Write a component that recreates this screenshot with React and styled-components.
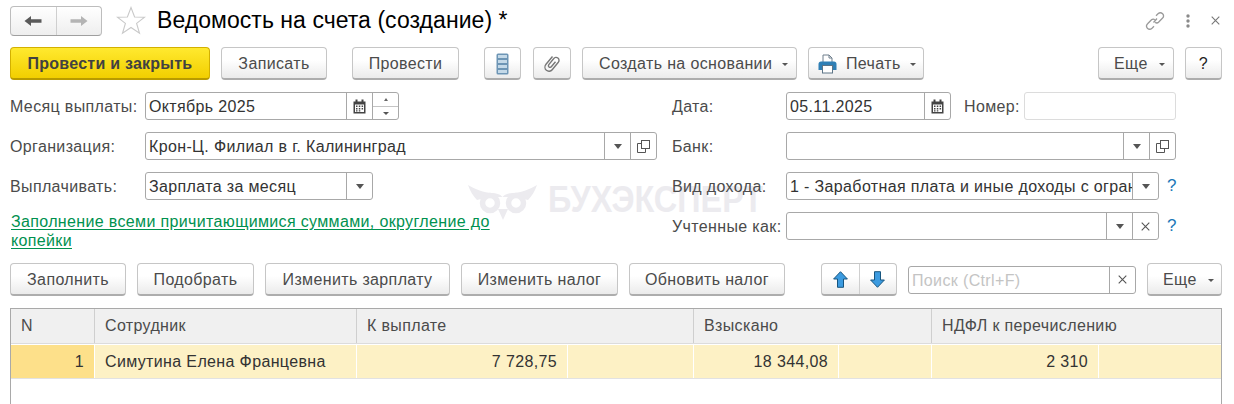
import styled, { createGlobalStyle } from "styled-components";

/* ---------- data ---------- */
const actionButtons = ["Заполнить", "Подобрать", "Изменить зарплату", "Изменить налог", "Обновить налог"];
const actionWidths = [116, 117, 185, 157, 156];

/* ---------- global ---------- */
const GlobalStyle = createGlobalStyle`
  html, body {
    margin: 0;
    padding: 0;
    background: #fff;
  }
  * {
    box-sizing: border-box;
  }
`;

const Page = styled.div`
  position: relative;
  display: flex;
  flex-direction: column;
  width: 1234px;
  height: 404px;
  overflow: hidden;
  background: #fff;
  color: #4b4b4b;
  font-family: "Liberation Sans", Arial, sans-serif;
  font-size: 16px;
  letter-spacing: 0.36px;
`;

/* ---------- header ---------- */
const TitleBar = styled.div`
  display: flex;
  align-items: center;
  height: 47px;
  padding: 0 12px 6px 10px;
`;

const NavGroup = styled.div`
  display: flex;
  width: 92px;
  height: 30px;
  border: 1px solid #bdbdbd;
  border-bottom-color: #9f9f9f;
  border-radius: 4px;
  background: linear-gradient(#ffffff, #eeeeee);
`;

const NavCell = styled.div`
  flex: 1;
  display: flex;
  align-items: center;
  justify-content: center;
  & + & {
    border-left: 1px solid #cfcfcf;
  }
`;

const StarWrap = styled.div`
  display: flex;
  margin: 0 11px 0 14px;
`;

const Title = styled.h1`
  margin: 0;
  font-size: 23px;
  font-weight: 400;
  letter-spacing: 0.05px;
  color: #000;
  white-space: nowrap;
`;

const TitleTools = styled.div`
  display: flex;
  align-items: center;
  gap: 21px;
  margin-left: auto;
  padding-right: 2px;
`;

/* ---------- buttons ---------- */
const Toolbar = styled.div`
  display: flex;
  align-items: center;
  padding: 0 10px;
  height: 33px;
`;

const Button = styled.button`
  display: flex;
  align-items: center;
  justify-content: ${(p) => (p.$pl ? "flex-start" : "center")};
  flex: none;
  gap: ${(p) => p.$inner ?? 7}px;
  width: ${(p) => p.$w}px;
  height: 33px;
  margin-left: ${(p) => p.$gap ?? 11}px;
  padding: 1px 0 0 ${(p) => p.$pl ?? 0}px;
  border: 1px solid #c6c6c6;
  border-bottom: 2px solid #adadad;
  border-radius: 4px;
  background: linear-gradient(#ffffff 40%, #ebebeb);
  color: #4b4b4b;
  font: inherit;
  letter-spacing: 0.36px;
  white-space: nowrap;
  &:first-child {
    margin-left: 0;
  }
`;

const PrimaryButton = styled(Button)`
  border-color: #d3b000;
  border-bottom-color: #b99b00;
  background: linear-gradient(#ffe92f, #f2cf00);
  color: #414141;
  font-weight: 700;
  letter-spacing: 0.25px;
`;

const HelpButton = styled(Button)`
  color: #222;
`;

const Caret = styled.span`
  width: 0;
  height: 0;
  border-left: 3px solid transparent;
  border-right: 3px solid transparent;
  border-top: 3px solid #555;
  margin-left: ${(p) => p.$ml ?? 0}px;
  margin-top: 2px;
`;

const ArrowGroup = styled.div`
  display: flex;
  flex: none;
  width: 76px;
  height: 33px;
  margin-left: ${(p) => p.$gap}px;
  border: 1px solid #c6c6c6;
  border-bottom: 2px solid #adadad;
  border-radius: 4px;
  background: linear-gradient(#ffffff 40%, #ebebeb);
`;

/* ---------- form ---------- */
const Form = styled.div`
  display: grid;
  grid-template-columns: 662px 1fr;
  padding: 12px 0 0 10px;
  height: 183px;
`;

const FormColumn = styled.div`
  display: flex;
  flex-direction: column;
  gap: 12px;
`;

const Row = styled.div`
  display: flex;
  align-items: center;
  height: 28px;
`;

const Label = styled.span`
  flex: none;
  width: ${(p) => p.$w ?? 135}px;
  margin-left: ${(p) => p.$ml ?? 0}px;
  padding-top: 1px;
  white-space: nowrap;
`;

const Field = styled.div`
  display: flex;
  flex: none;
  width: ${(p) => p.$w}px;
  height: 28px;
  border: 1px solid ${(p) => (p.$soft ? "#dcdcdc" : "#a8a8a8")};
  border-radius: 3px;
  background: #fff;
  overflow: hidden;
`;

const FieldText = styled.div`
  flex: 1;
  min-width: 0;
  padding-left: 3px;
  line-height: 27px;
  color: ${(p) => (p.$placeholder ? "#c4c4c4" : "#333")};
  white-space: nowrap;
  overflow: hidden;
`;

const FieldCell = styled.div`
  display: flex;
  align-items: center;
  justify-content: center;
  flex: none;
  width: ${(p) => p.$w ?? 26}px;
  border-left: 1px solid #a8a8a8;
`;

const SpinCell = styled(FieldCell)`
  flex-direction: column;
`;

const SpinPart = styled.div`
  display: flex;
  flex: 1;
  align-items: center;
  justify-content: center;
  width: 100%;
  & + & {
    border-top: 1px solid #c4c4c4;
  }
`;

const SmallCaretUp = styled.span`
  width: 0;
  height: 0;
  border-left: 2.5px solid transparent;
  border-right: 2.5px solid transparent;
  border-bottom: 3px solid #666;
`;

const DropCaret = styled.span`
  width: 0;
  height: 0;
  border-left: 4px solid transparent;
  border-right: 4px solid transparent;
  border-top: 5px solid #555;
`;

const Help = styled.span`
  margin-left: 8px;
  color: #1b78b8;
  font-size: 17px;
  margin-top: -1px;
`;

const GreenLink = styled.a`
  display: block;
  width: 495px;
  margin: 0 0 0 1px;
  color: #00914f;
  line-height: 19px;
  letter-spacing: 0.35px;
  text-decoration: underline;
  text-underline-offset: 2px;
`;

/* ---------- watermark ---------- */
const Watermark = styled.div`
  position: absolute;
  left: 468px;
  top: 185px;
  display: flex;
  align-items: flex-start;
  gap: 11px;
  color: #ecebef;
  pointer-events: none;
`;

const WatermarkText = styled.span`
  font-size: 36px;
  font-weight: 700;
  line-height: 30px;
  letter-spacing: 0;
  transform: scaleX(0.9);
  transform-origin: left center;
`;

const FormLayer = styled.div`
  position: relative;
  z-index: 1;
`;

/* ---------- search ---------- */
const SearchBox = styled(Field)`
  margin-left: 11px;
`;

/* ---------- table ---------- */
const Table = styled.div`
  flex: 1;
  margin: 12px 12px 0 10px;
  border: 1px solid #a9a9a9;
  border-bottom: none;
  background: #fff;
`;

const columnGrid = "84px 262px 211px 126px 145px 93px 167px 1fr";

const HeaderRow = styled.div`
  display: grid;
  grid-template-columns: ${columnGrid};
  height: 35px;
  background: #f0f0f0;
  border-bottom: 1px solid #dcdcdc;
`;

const HeaderCell = styled.div`
  grid-column: span ${(p) => p.$span ?? 1};
  padding-left: 10px;
  border-right: 1px solid #cfcfcf;
  line-height: 33px;
  white-space: nowrap;
  &:last-child {
    border-right: none;
  }
`;

const DataRow = styled.div`
  display: grid;
  grid-template-columns: ${columnGrid};
  height: 34px;
  margin-top: 1px;
  border-bottom: 1px solid #e2e2e2;
`;

const DataCell = styled.div`
  padding: 0 10px;
  background: ${(p) => (p.$marked ? "#fde08a" : "#fdf1c5")};
  border-right: 1px solid #fff;
  line-height: 33px;
  color: #333;
  text-align: ${(p) => (p.$right ? "right" : "left")};
  white-space: nowrap;
  &:last-child {
    border-right: none;
  }
`;

/* ---------- icons ---------- */
const BackIcon = ({ color }) => (
  <svg width="18" height="12" viewBox="0 0 18 12">
    <path d="M0.5 6 L7 1 V4.3 H17.5 V7.7 H7 V11 Z" fill={color} />
  </svg>
);

const ForwardIcon = ({ color }) => (
  <svg width="18" height="12" viewBox="0 0 18 12">
    <path d="M17.5 6 L11 1 V4.3 H0.5 V7.7 H11 V11 Z" fill={color} />
  </svg>
);

const StarIcon = () => (
  <svg width="30" height="29" viewBox="0 0 30 29">
    <path
      d="M15 1.5 L18.6 11 L28.6 11.2 L20.6 17.4 L23.5 27.3 L15 21.5 L6.5 27.3 L9.4 17.4 L1.4 11.2 L11.4 11 Z"
      fill="#fff"
      stroke="#c9c9c9"
      strokeWidth="1.1"
    />
  </svg>
);

const LinkIcon = () => (
  <svg width="20" height="20" viewBox="0 0 20 20" fill="none" stroke="#9a9a9a" strokeWidth="1.3">
    <path d="M8.5 11.5 L12 7.5 M11 4.8 L13 2.8 C14.4 1.5 16.4 1.6 17.6 2.8 C18.8 4.1 18.6 6 17.4 7.2 L13.5 11.3 C12.6 12.2 11 12.2 10.2 11.3" />
    <path d="M9 15.2 L7 17.2 C5.6 18.5 3.6 18.4 2.4 17.2 C1.2 15.9 1.4 14 2.6 12.8 L6.5 8.7 C7.4 7.8 9 7.8 9.8 8.7" />
  </svg>
);

const KebabIcon = () => (
  <svg width="4" height="14" viewBox="0 0 4 14" fill="#8a8a8a">
    <circle cx="2" cy="2" r="1.7" />
    <circle cx="2" cy="7" r="1.7" />
    <circle cx="2" cy="12" r="1.7" />
  </svg>
);

const CloseIcon = ({ size = 9, color = "#777" }) => (
  <svg width={size} height={size} viewBox="0 0 9 9" stroke={color} strokeWidth="1.1">
    <path d="M0.7 0.7 L8.3 8.3 M8.3 0.7 L0.7 8.3" />
  </svg>
);

const ListIcon = () => (
  <svg width="13" height="22" viewBox="0 0 13 22">
    <rect x="0.5" y="0.5" width="12" height="21" rx="1.5" fill="#6d95b5" />
    <rect x="2" y="2" width="9" height="3" fill="#c4d9e8" />
    <rect x="2" y="7" width="9" height="3" fill="#c4d9e8" />
    <rect x="2" y="12" width="9" height="3" fill="#c4d9e8" />
    <rect x="2" y="17" width="9" height="3" fill="#c4d9e8" />
  </svg>
);

const ClipIcon = () => (
  <svg width="16" height="18" viewBox="0 0 16 18" fill="none" stroke="#777" strokeWidth="1.4">
    <path d="M8.5 1.5 L2 9.2 C0.5 11 0.7 13.8 2.4 15.3 C4.2 16.8 6.8 16.4 8.2 14.7 L14.3 7.3 C15.4 5.9 15.2 4 13.9 3 C12.6 2 10.8 2.2 9.8 3.5 L4.8 9.6 C4.2 10.4 4.3 11.4 5 12 C5.7 12.6 6.7 12.4 7.3 11.7 L11.5 6.7" />
  </svg>
);

const PrinterIcon = () => (
  <svg width="19" height="20" viewBox="0 0 19 20">
    <path d="M5 1 H11 L14 4 V9 H5 Z" fill="#fff" stroke="#6f7f8c" />
    <path d="M11 1 V4 H14" fill="none" stroke="#6f7f8c" />
    <path d="M0.5 10 C0.5 8.5 1.5 7.5 3 7.5 H16 C17.5 7.5 18.5 8.5 18.5 10 V16 H0.5 Z" fill="#2f7fb5" />
    <rect x="4.5" y="11.5" width="10" height="7.5" fill="#fff" stroke="#5c7486" />
  </svg>
);

const CalendarIcon = () => (
  <svg width="13" height="15" viewBox="0 0 13 15">
    <path d="M0.5 2.5 H12.5 V14.5 H0.5 Z" fill="#444" />
    <rect x="2.5" y="0.5" width="2" height="3" fill="#444" />
    <rect x="8.5" y="0.5" width="2" height="3" fill="#444" />
    <rect x="2" y="5.5" width="9" height="7.5" fill="#fff" />
    <path
      d="M3 6.5 h1.5 v1.5 h-1.5 Z M5.8 6.5 h1.5 v1.5 h-1.5 Z M8.6 6.5 h1.5 v1.5 h-1.5 Z M3 9 h1.5 v1.5 h-1.5 Z M5.8 9 h1.5 v1.5 h-1.5 Z M8.6 9 h1.5 v1.5 h-1.5 Z M3 11.3 h1.5 v1.3 h-1.5 Z M5.8 11.3 h1.5 v1.3 h-1.5 Z"
      fill="#444"
    />
  </svg>
);

const CopyIcon = () => (
  <svg width="13" height="13" viewBox="0 0 13 13" fill="none" stroke="#555">
    <rect x="4.5" y="0.5" width="8" height="8" fill="#fff" />
    <path d="M4.5 3.5 H0.5 V12.5 H8.5 V8.5" />
  </svg>
);

const UpIcon = () => (
  <svg width="15" height="17" viewBox="0 0 15 17">
    <path d="M7.5 0.7 L14.4 8 H10.5 V16.3 H4.5 V8 H0.6 Z" fill="#3c9be0" stroke="#17557f" />
  </svg>
);

const DownIcon = () => (
  <svg width="15" height="17" viewBox="0 0 15 17">
    <path d="M7.5 16.3 L14.4 9 H10.5 V0.7 H4.5 V9 H0.6 Z" fill="#3c9be0" stroke="#17557f" />
  </svg>
);

const OwlIcon = () => (
  <svg width="69" height="35" viewBox="0 0 69 35" fill="none">
    <path
      d="M0 0 C7 4 16 8 24 8 C28 8 32 9 34.5 12 C37 9 41 8 45 8 C53 8 62 4 69 0 C67 6 64 11 60 15 L48 12 H21 L9 15 C5 11 2 6 0 0 Z"
      fill="#ecebef"
    />
    <circle cx="22" cy="18" r="7.5" stroke="#ecebef" strokeWidth="5.5" />
    <circle cx="48" cy="18" r="7.5" stroke="#ecebef" strokeWidth="5.5" />
    <path d="M30 24 L35 35 L40 24 Z" fill="#ecebef" />
  </svg>
);

/* ---------- app ---------- */
const App = () => (
  <Page>
    <GlobalStyle />
    <Watermark>
      <OwlIcon />
      <WatermarkText>БУХЭКСПЕРТ</WatermarkText>
    </Watermark>

    <TitleBar>
      <NavGroup>
        <NavCell>
          <BackIcon color="#5a5a5a" />
        </NavCell>
        <NavCell>
          <ForwardIcon color="#b4b4b4" />
        </NavCell>
      </NavGroup>
      <StarWrap>
        <StarIcon />
      </StarWrap>
      <Title>Ведомость на счета (создание) *</Title>
      <TitleTools>
        <LinkIcon />
        <KebabIcon />
        <CloseIcon />
      </TitleTools>
    </TitleBar>

    <Toolbar>
      <PrimaryButton $w={200}>Провести и закрыть</PrimaryButton>
      <Button $w={106}>Записать</Button>
      <Button $w={107} $gap={25}>Провести</Button>
      <Button $w={37} $gap={25}><ListIcon /></Button>
      <Button $w={38} $gap={12}><ClipIcon /></Button>
      <Button $w={215} $pl={16}>Создать на основании <Caret $ml={3} /></Button>
      <Button $w={116} $pl={9} $inner={9}><PrinterIcon /> Печать <Caret /></Button>
      <Button $w={76} $gap={174} $pl={15}>Еще <Caret $ml={4} /></Button>
      <HelpButton $w={37}>?</HelpButton>
    </Toolbar>

    <FormLayer>
      <Form>
        <FormColumn>
          <Row>
            <Label>Месяц выплаты:</Label>
            <Field $w={254}>
              <FieldText>Октябрь 2025</FieldText>
              <FieldCell><CalendarIcon /></FieldCell>
              <SpinCell $w={26}>
                <SpinPart><SmallCaretUp /></SpinPart>
                <SpinPart><Caret /></SpinPart>
              </SpinCell>
            </Field>
          </Row>
          <Row>
            <Label>Организация:</Label>
            <Field $w={512}>
              <FieldText>Крон-Ц. Филиал в г. Калининград</FieldText>
              <FieldCell><DropCaret /></FieldCell>
              <FieldCell><CopyIcon /></FieldCell>
            </Field>
          </Row>
          <Row>
            <Label>Выплачивать:</Label>
            <Field $w={228}>
              <FieldText>Зарплата за месяц</FieldText>
              <FieldCell><DropCaret /></FieldCell>
            </Field>
          </Row>
          <GreenLink>Заполнение всеми причитающимися суммами, округление до копейки</GreenLink>
        </FormColumn>

        <FormColumn>
          <Row>
            <Label $w={114}>Дата:</Label>
            <Field $w={165}>
              <FieldText>05.11.2025</FieldText>
              <FieldCell><CalendarIcon /></FieldCell>
            </Field>
            <Label $w={60} $ml={13}>Номер:</Label>
            <Field $w={152} $soft />
          </Row>
          <Row>
            <Label $w={114}>Банк:</Label>
            <Field $w={390}>
              <FieldText />
              <FieldCell><DropCaret /></FieldCell>
              <FieldCell><CopyIcon /></FieldCell>
            </Field>
          </Row>
          <Row>
            <Label $w={114}>Вид дохода:</Label>
            <Field $w={373}>
              <FieldText>1 - Заработная плата и иные доходы с ограничением</FieldText>
              <FieldCell><DropCaret /></FieldCell>
            </Field>
            <Help>?</Help>
          </Row>
          <Row>
            <Label $w={114}>Учтенные как:</Label>
            <Field $w={373}>
              <FieldText />
              <FieldCell><DropCaret /></FieldCell>
              <FieldCell><CloseIcon size={9} color="#555" /></FieldCell>
            </Field>
            <Help>?</Help>
          </Row>
        </FormColumn>
      </Form>

      <Toolbar>
        {actionButtons.map((title, idx) => (
          <Button key={title} $w={actionWidths[idx]}>{title}</Button>
        ))}
        <ArrowGroup $gap={36}>
          <NavCell><UpIcon /></NavCell>
          <NavCell><DownIcon /></NavCell>
        </ArrowGroup>
        <SearchBox $w={228}>
          <FieldText $placeholder>Поиск (Ctrl+F)</FieldText>
          <FieldCell><CloseIcon size={9} color="#555" /></FieldCell>
        </SearchBox>
        <Button $w={75} $pl={15}>Еще <Caret $ml={4} /></Button>
      </Toolbar>
    </FormLayer>

    <Table>
      <HeaderRow>
        <HeaderCell>N</HeaderCell>
        <HeaderCell>Сотрудник</HeaderCell>
        <HeaderCell $span={2}>К выплате</HeaderCell>
        <HeaderCell $span={2}>Взыскано</HeaderCell>
        <HeaderCell $span={2}>НДФЛ к перечислению</HeaderCell>
      </HeaderRow>
      <DataRow>
        <DataCell $marked $right>1</DataCell>
        <DataCell>Симутина Елена Францевна</DataCell>
        <DataCell $right>7 728,75</DataCell>
        <DataCell />
        <DataCell $right>18 344,08</DataCell>
        <DataCell />
        <DataCell $right>2 310</DataCell>
        <DataCell />
      </DataRow>
    </Table>
  </Page>
);

export default App;
